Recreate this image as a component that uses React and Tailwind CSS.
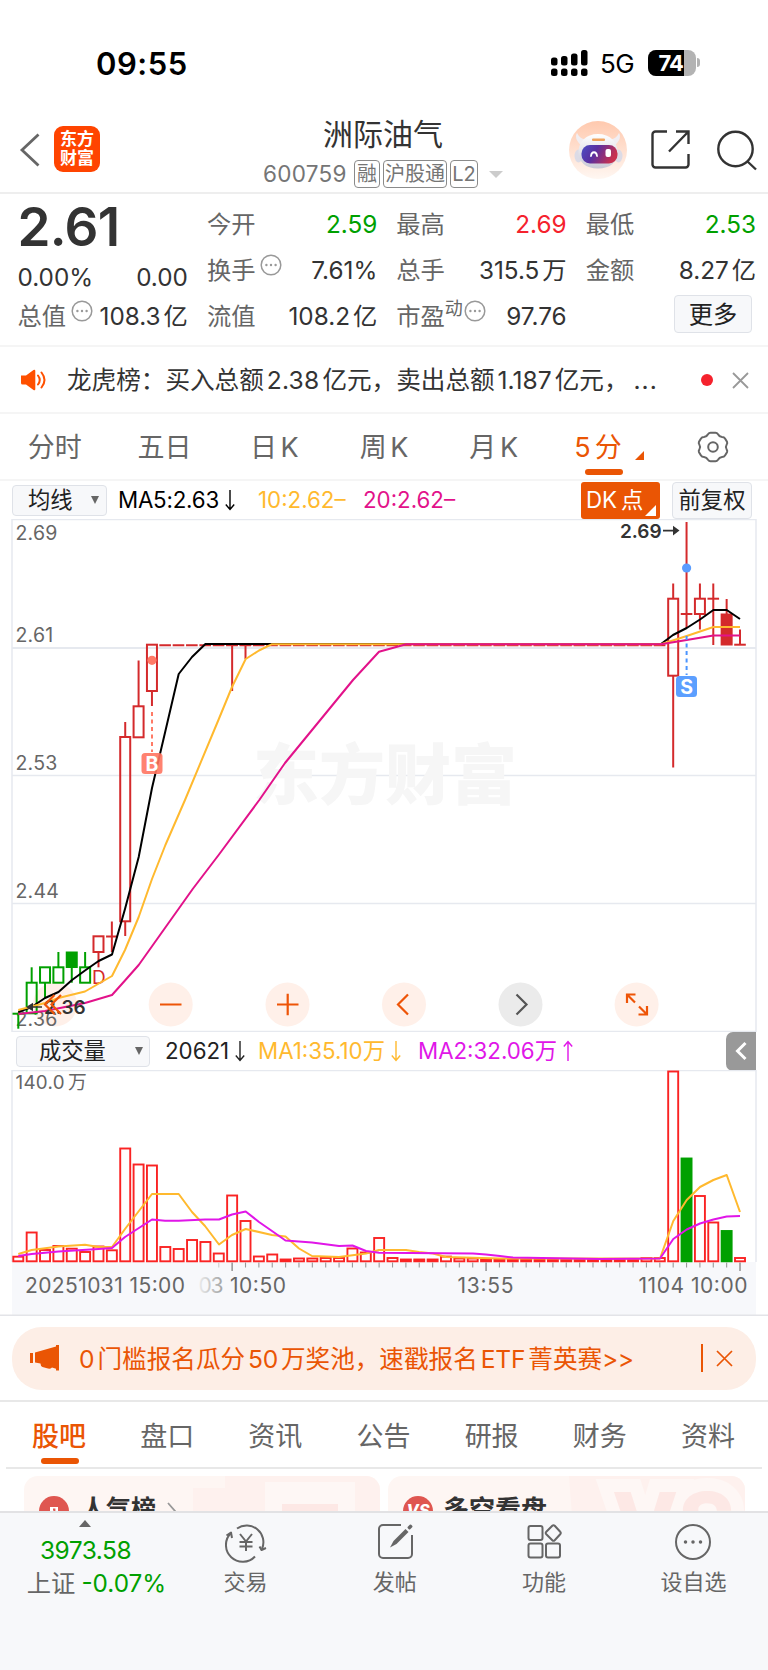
import React from "react";

const STEP = 13.365;
const barX = (i) => 18.3 + STEP * i;

const RED = "#d42a2c";
const GREEN = "#00a000";

// [index, open/close top, open/close bottom, high, low, color, filled]
const candles = [
  [0, 1013.7, 1013.7, 1013.7, 1028.7, GREEN, false],
  [1, 982.7, 1013.3, 967.3, 1013.3, GREEN, false],
  [2, 967.3, 982.7, 967.3, 998, GREEN, false],
  [3, 967.3, 982.7, 952, 982.7, GREEN, false],
  [4, 952.5, 967, 952, 982.7, GREEN, true],
  [5, 967.3, 982.7, 952, 982.7, GREEN, false],
  [6, 936.3, 952, 936.3, 967.3, RED, false],
  [7, 936.5, 936.5, 921.5, 952, RED, false],
  [8, 737, 921.3, 722, 936, RED, false],
  [9, 706.3, 737.3, 660.5, 737.3, RED, false],
  [10, 644.7, 691, 644.7, 706, RED, false],
  [16, 645, 645, 645, 691, RED, false],
  [17, 645, 645, 645, 659, RED, false],
  [49, 598.7, 675.7, 583.5, 767.5, RED, false],
  [50, 614, 614, 522, 628, RED, false],
  [51, 598.7, 614, 583.5, 629.5, RED, false],
  [52, 598.7, 598.7, 583.5, 645, RED, false],
  [53, 614.5, 644.5, 599, 644.5, RED, true],
  [54, 644.7, 644.7, 629.5, 644.7, RED, false],
];

const volumeTops = [
  1256.7, 1232.5, 1250, 1246, 1248.7, 1252, 1246.5, 1250.3, 1148.5, 1164.5, 1165.5,
  1247, 1249, 1240, 1242, 1253.5, 1195.5, 1221, 1256.5, 1254.5, 1259.5, 1258.5,
  1258.5, 1258, 1258, 1248.5, 1252.5, 1238, 1258, 1259.5, 1259.5, 1259.5, 1256.6,
  1258.5, 1258.5, 1259.5, 1259.5, 1259.5, 1259.5, 1259.5, 1259.5, 1259.5, 1259.5,
  1259.5, 1259.5, 1259.5, 1259.5, 1258, 1258, 1071.5, 1158.5, 1196, 1222.5, 1231, 1258,
];

const ma5 = "18.3,1012 31.7,1007 45,998 58.5,992 72,980 85,970.5 98.6,961 112,954.5 125,909 138.7,857 152,788 165.4,731 178.7,674 192,657 205.4,644 661,644 673,635 686.7,628 700,619.5 713.4,610 726.7,610 740,619";
const ma10 = "18.3,1010 45,1003 58.5,998 85,991.5 112,976 125,950 138.7,917 152,879 165.4,845 185,800 218,721 232,687 245.7,659 259,650.5 272,644.2 661,644.2 686.7,636 713.4,627 740,627";
const ma20 = "18.3,1014 45,1011 85,1003 112,995 125,980.5 138.7,965 192.7,889 219,854.5 259.3,800 285,763 353,680 379,651.7 392.6,648 406,644.2 661,644.2 686.7,640 713.4,635.5 740,635.5";
const vol1 = "18.3,1254 31.7,1250 58.5,1246.5 85,1244.7 98.6,1247 112,1247 125,1229 152,1194 178.7,1194 192,1212 205,1226 219,1244.5 232,1235 245.7,1229 272,1235 285.5,1236.5 299,1248.5 312,1256 339,1257 366,1253.5 379,1250 406,1250 419,1252 433,1253.5 446,1257 500,1258.5 660,1258.5 673.3,1221 686.7,1200 700,1187 713.4,1180 726.7,1175 740,1212";
const vol2 = "18.3,1256 31.7,1254 58.5,1251.5 98.6,1249 112,1248 125,1237 152,1219.5 165,1220.7 178.7,1220.7 205,1219.5 219,1219.5 232,1214.5 245.7,1211.5 259,1222 272,1231 285.5,1240.5 312,1242.5 339,1246 352.5,1245.5 366,1251 379,1252.7 473,1253.5 486,1254.5 500,1256 513,1257.5 600,1259 660,1258.5 673.3,1239 686.7,1229.5 700,1223.5 713.4,1219.5 726.7,1216.5 740,1216";

function Arrow({ up }) {
  return (
    <svg className="ml-[6px] shrink-0" width="10" height="22" viewBox="0 0 10 22" fill="none" stroke="currentColor" strokeWidth="1.4">
      {up ? <path d="M5 21V2M.8 6.5 5 1.5l4.2 5" /> : <path d="M5 1v19M.8 15.5 5 20.5l4.2-5" />}
    </svg>
  );
}

function Dots() {
  return (
    <svg className="-mt-[9px] ml-[5px] shrink-0" width="22" height="22" viewBox="0 0 22 22" fill="none" stroke="#999">
      <circle cx="11" cy="11" r="9.8" strokeWidth="1.5" />
      <path d="M6.4 11h.01M11 11h.01M15.6 11h.01" strokeWidth="2.4" strokeLinecap="round" />
    </svg>
  );
}

function StatusBar() {
  return (
    <div className="flex h-[110px] items-center pl-[96px] pt-[15px]">
      <div className="w-[454px] pt-[2px] text-[31px] font-semibold leading-none tracking-[0.5px] text-black">09:55</div>
      <svg width="38" height="28" viewBox="0 0 38 28" fill="#000">
        <rect x="1" y="8.5" width="6.5" height="8" rx="2.5" />
        <rect x="11" y="7" width="6.5" height="9.5" rx="2.5" />
        <rect x="21" y="4.5" width="6.5" height="12" rx="2.5" />
        <rect x="31" y="1" width="6.5" height="15.5" rx="2.5" />
        <rect x="1" y="19.500" width="6.5" height="7.500" rx="2.5" />
        <rect x="11" y="19.500" width="6.5" height="7.500" rx="2.5" />
        <rect x="21" y="19.500" width="6.5" height="7.500" rx="2.5" />
        <rect x="31" y="19.500" width="6.5" height="7.500" rx="2.5" />
      </svg>
      <div className="ml-[12px] w-[48px] pt-[2px] text-[26px] leading-none tracking-[-0.5px] text-black">5G</div>
      <div className="flex h-[26px] w-[48px] items-center overflow-hidden rounded-[8px] bg-[#b3b3b3]">
        <div className="flex h-full w-[36px] items-center justify-end bg-black pr-[1px] text-[22px] font-bold leading-none tracking-[-1px] text-white">74</div>
      </div>
      <div className="ml-[1px] h-[9px] w-[3px] rounded-r-[3px] bg-[#b3b3b3]" />
    </div>
  );
}

function Robot() {
  return (
    <svg width="58" height="58" viewBox="0 0 58 58">
      <defs>
        <linearGradient id="halo" x1="0" y1="0" x2="0" y2="1">
          <stop offset="0" stopColor="#ffc9ae" />
          <stop offset="1" stopColor="#fff7f2" />
        </linearGradient>
        <linearGradient id="visor" x1="0" y1="0" x2="1" y2="0.3">
          <stop offset="0" stopColor="#4b4fc4" />
          <stop offset="0.45" stopColor="#5a2fa0" />
          <stop offset="1" stopColor="#c8304f" />
        </linearGradient>
        <linearGradient id="shell" x1="0" y1="0" x2="0" y2="1">
          <stop offset="0" stopColor="#ffffff" />
          <stop offset="1" stopColor="#c9c9d6" />
        </linearGradient>
      </defs>
      <circle cx="29" cy="29" r="29" fill="url(#halo)" />
      <path d="M12 24C7 20 6 15 8 12c2 4 5 6 9 7zM46 24c5-4 6-9 4-12-2 4-5 6-9 7z" fill="#f1eef2" />
      <ellipse cx="9.5" cy="35" rx="4" ry="6.5" fill="#dcdbe6" />
      <ellipse cx="49.500" cy="35" rx="4" ry="6.5" fill="#dcdbe6" />
      <path d="M29 13c12 0 19.500 8 19.500 18 0 10-7 16.500-19.500 16.500S9.500 41 9.500 31c0-10 7.500-18 19.500-18z" fill="url(#shell)" />
      <rect x="12.500" y="24" width="36" height="18.500" rx="8.500" fill="url(#visor)" />
      <path d="M22 35c.5-5 5.500-5 6 0" fill="none" stroke="#fff" strokeWidth="1.800" strokeLinecap="round" />
      <rect x="36.500" y="28" width="5.500" height="8" rx="2" fill="#fff" />
      <rect x="23" y="17.500" width="13" height="2.500" rx="1" fill="#f0a35e" />
    </svg>
  );
}

function Header() {
  const tag = "flex h-[28px] items-center justify-center rounded-[4px] border-[1.5px] border-[#8a8a8a] text-[20px] leading-none text-[#757575]";
  return (
    <header className="flex h-[84px] items-center border-b-2 border-[#eee] pl-[19px]">
      <svg className="mt-[-3px]" width="22" height="34" viewBox="0 0 22 34" fill="none" stroke="#666" strokeWidth="2.8">
        <path d="M19.500 1.500 3 17l16.500 15.500" />
      </svg>
      <div className="ml-[13px] mt-[-5px] flex h-[46px] w-[46px] flex-col items-center justify-center rounded-[9px] bg-[#ff4400] text-[17px] font-bold leading-[18.500px] text-white">
        <span>东方</span>
        <span>财富</span>
      </div>
      <div className="ml-[163px] flex h-full w-[240px] flex-col items-start">
        <div className="ml-[60px] mt-[7px] text-[30px] leading-[34px] text-[#333]">洲际油气</div>
        <div className="mt-[9px] flex items-center">
          <span className="w-[91px] text-[22.500px] leading-none tracking-[0.3px] text-[#757575]">600759</span>
          <span className={tag + " w-[26px]"}>融</span>
          <span className={tag + " ml-[3px] w-[64px]"}>沪股通</span>
          <span className={tag + " ml-[3px] w-[28px]"}>L2</span>
          <span className="ml-[11px] h-0 w-0 border-x-[7px] border-t-[7px] border-x-transparent border-t-[#ccc]" />
        </div>
      </div>
      <div className="mt-[-2px] flex items-center pl-[66px]">
        <Robot />
        <svg className="ml-[23px]" width="42" height="42" viewBox="0 0 42 42" fill="none" stroke="#333" strokeWidth="2.400">
          <path d="M17 2.500H5.500a3 3 0 0 0-3 3v30a3 3 0 0 0 3 3h30a3 3 0 0 0 3-3V25M26 2.500h12.500v12.500M38.500 2.500 19 22.500" />
        </svg>
        <svg className="ml-[25px]" width="42" height="42" viewBox="0 0 42 42" fill="none" stroke="#333" strokeWidth="2.400">
          <circle cx="18.500" cy="20" r="17.200" />
          <path d="m30.500 32.500 8.500 8" />
        </svg>
      </div>
    </header>
  );
}

function Cell({ label, sup, dots, value, unit, color = "text-[#333]" }) {
  return (
    <div className="flex h-[46px] items-center justify-between whitespace-nowrap leading-none">
      <span className="flex items-center text-[#666]">
        {label}
        {sup && <span className="-mt-[14px] text-[18px]">{sup}</span>}
        {dots && (sup ? <span className="-ml-[4px] flex"><Dots /></span> : <Dots />)}
      </span>
      <span className={color}>
        {value}
        {unit && <span className="ml-[3px]">{unit}</span>}
      </span>
    </div>
  );
}

function Quote() {
  return (
    <section className="grid h-[153px] grid-cols-4 gap-x-[19px] border-b-2 border-[#f5f5f5] pl-[17.500px] pr-[12px] pt-[7px] text-[24.300px]">
      <div>
        <div className="h-[58px] text-[53px] font-semibold leading-[53px] tracking-[-0.700px] text-[#333]">2.61</div>
        <div className="flex h-[36px] items-center justify-between leading-none text-[#333]">
          <span>0.00%</span>
          <span>0.00</span>
        </div>
        <div className="-mt-[2px]">
          <Cell label="总值" dots value="108.3" unit="亿" />
        </div>
      </div>
      <div>
        <Cell label="今开" value="2.59" color="text-[#00a000]" />
        <Cell label="换手" dots value="7.61%" />
        <Cell label="流值" value="108.2" unit="亿" />
      </div>
      <div>
        <Cell label="最高" value="2.69" color="text-[#f5222d]" />
        <Cell label="总手" value="315.5" unit="万" />
        <Cell label="市盈" sup="动" dots value="97.76" />
      </div>
      <div>
        <Cell label="最低" value="2.53" color="text-[#00a000]" />
        <Cell label="金额" value="8.27" unit="亿" />
        <div className="flex justify-end pr-[4px] pt-[2px]">
          <button className="h-[38px] w-[78px] rounded-[4px] border-[1.500px] border-[#dfe2e8] bg-[#f7f8fa] leading-none text-[#222]">更多</button>
        </div>
      </div>
    </section>
  );
}

function Notice() {
  return (
    <div className="flex h-[67px] items-center border-b-2 border-[#f5f5f5] pl-[21px] pt-[1px] leading-none">
      <svg width="26" height="22" viewBox="0 0 26 22" fill="#ff5000">
        <path d="M0 6.500h5L12.500 1q1.800-.8 1.800 1v18q0 1.800-1.800 1L5 15.500H1.500Q0 15.500 0 14z" />
        <path d="M17 6.500q3.500 4.500 0 9M20.500 3.500q6 7.500 0 15" fill="none" stroke="#ff5000" strokeWidth="2" strokeLinecap="round" />
      </svg>
      <div className="ml-[20px] flex w-[634px] items-center whitespace-nowrap pt-[1px] text-[24.600px] text-[#333]">
        龙虎榜：买入总额<span className="mx-[3px] tracking-[0.2px]">2.38</span>亿元，卖出总额<span className="mx-[3px]">1.187</span>亿元，<span className="ml-[5px] tracking-[1px]">...</span>
      </div>
      <span className="h-[12px] w-[12px] rounded-full bg-[#f5222d]" />
      <svg className="ml-[19px]" width="17" height="17" viewBox="0 0 17 17" stroke="#999" strokeWidth="1.800">
        <path d="m1 1 15 15M16 1 1 16" />
      </svg>
    </div>
  );
}

function PeriodTabs() {
  const items = ["分时", "五日", "日 K", "周 K", "月 K"];
  return (
    <nav className="grid h-[67px] grid-cols-7 border-b-2 border-[#f5f5f5] text-[27px] leading-none text-[#666]">
      {items.map((t) => (
        <span key={t} className="flex items-center justify-center pt-[1px] [word-spacing:-4px]">{t}</span>
      ))}
      <span className="relative flex items-center justify-center pr-[11px] pt-[1px] text-[#ea5504]">
        5<span className="ml-[4px]">分</span>
        <i className="absolute bottom-[19px] right-[14px] h-0 w-0 border-b-[9px] border-l-[9px] border-b-[#ea5504] border-l-transparent" />
        <i className="absolute bottom-[4px] left-[36px] h-[6px] w-[38px] rounded-[3px] bg-[#ea5504]" />
      </span>
      <span className="flex items-center justify-center">
        <svg width="32" height="32" viewBox="0 0 32 32" fill="none" stroke="#666" strokeWidth="2">
          <path d="M11 3.200Q12 1.700 13.500 1.700h5q1.500 0 2.500 1.500 1.300 2.600 4 2.800 2.200 0 3 1.400l2 3.400q.7 1.400-.4 2.900-1.500 2.300 0 4.600 1.100 1.500.4 2.900l-2 3.400q-.8 1.400-3 1.400-2.700.2-4 2.800-1 1.500-2.500 1.500h-5q-1.500 0-2.500-1.500-1.300-2.600-4-2.800-2.200 0-3-1.400l-2-3.400q-.7-1.400.4-2.900 1.500-2.300 0-4.600-1.100-1.500-.4-2.900l2-3.400Q4.800 6 7 6q2.700-.2 4-2.800z" />
          <circle cx="16" cy="16" r="4.800" />
        </svg>
      </span>
    </nav>
  );
}

function ChartToolbar() {
  const box = "flex items-center border-[1.500px] border-[#dfe2e8] bg-[#f7f8fa] rounded-[4px] text-[#222]";
  return (
    <div className="flex h-[38px] items-center pl-[12px] text-[22.300px] leading-none">
      <div className={box + " h-[31px] w-[95px] pl-[15px]"}>
        均线
        <i className="ml-[18px] h-0 w-0 border-x-[4.500px] border-t-[8px] border-x-transparent border-t-[#666]" />
      </div>
      <div className="ml-[11px] flex w-[140px] items-center tracking-[-0.200px] text-black">MA5:2.63<Arrow /></div>
      <div className="w-[105px] text-[#ffb92e]">10:2.62–</div>
      <div className="w-[218px] text-[#e2128a]">20:2.62–</div>
      <div className="relative flex h-[37px] w-[79px] items-center rounded-[3px] bg-[#ea5504] pl-[5px] text-white">
        DK<span className="ml-[4px]">点</span>
        <i className="absolute bottom-[3px] right-[4px] h-0 w-0 border-b-[11px] border-l-[11px] border-b-white border-l-transparent" />
      </div>
      <div className={box + " ml-[12px] h-[37px] w-[80px] justify-center"}>前复权</div>
    </div>
  );
}

function Candle({ c }) {
  const [i, top, bottom, high, low, color, filled] = c;
  const x = barX(i);
  return (
    <g stroke={color} strokeWidth="2" fill={filled ? color : "none"}>
      {high < top && <path d={`M${x} ${high}V${top}`} />}
      {low > bottom && <path d={`M${x} ${bottom}V${low}`} />}
      {top === bottom ? <path d={`M${x - 5.8} ${top}h11.600`} /> : <rect x={x - 5} y={top} width="10" height={bottom - top} />}
    </g>
  );
}

function PriceChart() {
  const labels = [["2.69", 540], ["2.61", 641.500], ["2.53", 769.500], ["2.44", 898], ["2.36", 1026]];
  return (
    <svg className="block" width="768" height="513" viewBox="0 519 768 513" fill="none">
      <g stroke="#e6e9ef" strokeWidth="1.500">
        <path d="M12 519.500H756V1031.500H12z" />
        <path d="M12 648H756" strokeWidth="2" />
        <path d="M12 775.500H756M12 903.500H756" />
      </g>
      <text x="253" y="799" fontSize="66" fontWeight="900" fill="#f6f6f6" className="font-['Noto_Sans_CJK_SC',sans-serif]">东方财富</text>
      <circle cx="55" cy="1004.500" r="22" fill="#fff0e9" />
      <g fontSize="19.500" fill="#666" letterSpacing="0.200">
        {labels.map(([t, y]) => <text key={t} x="15.500" y={y}>{t}</text>)}
      </g>

      <path d={`M${barX(11) - 6} 645.300H${barX(48) + 7}`} stroke={RED} strokeWidth="2" strokeDasharray="11.600 1.765" />
      {candles.map((c) => <Candle key={c[0]} c={c} />)}
      <text x="92" y="983.500" fontSize="19" fill={RED}>D</text>

      <g strokeWidth="2" strokeLinejoin="round">
        <polyline points={ma5} stroke="#000" />
        <polyline points={ma10} stroke="#ffb92e" />
        <polyline points={ma20} stroke="#e2128a" />
      </g>

      {/* buy / sell marks */}
      <circle cx="152" cy="660.300" r="4.600" fill="#ff7a66" />
      <path d="M152 712V752" stroke="#ff7a66" strokeWidth="2" strokeDasharray="4 3.500" />
      <rect x="141.500" y="753" width="21" height="21" rx="3.500" fill="#ff7461" fillOpacity="0.900" />
      <text x="152" y="770.500" fontSize="19.500" fontWeight="700" fill="#fff" textAnchor="middle">B</text>
      <circle cx="686.600" cy="568" r="4.600" fill="#5a9cff" />
      <path d="M686.600 636V675" stroke="#4b95ff" strokeWidth="2" strokeDasharray="4 3.500" />
      <rect x="676" y="676" width="21" height="21" rx="3.500" fill="#5c9fff" />
      <text x="686.600" y="693.500" fontSize="19.500" fontWeight="700" fill="#fff" textAnchor="middle">S</text>

      <g fill="#333" stroke="none">
        <text x="620" y="537.500" fontSize="19" fontWeight="600">2.69</text>
        <path d="M663 529.800h10v-4l6.500 4.800-6.500 4.800v-4h-10z" />
        <text x="44" y="1014" fontSize="19" fontWeight="600">2.36</text>
        <path d="M42 1006.200H33v-3.500l-7 4.300 7 4.300v-3.500h9z" />
      </g>

      <g fill="#fff0e9">
        <circle cx="170.700" cy="1004.500" r="22" />
        <circle cx="287.500" cy="1004.500" r="22" />
        <circle cx="404" cy="1004.500" r="22" />
        <circle cx="636.600" cy="1004.500" r="22" />
      </g>
      <circle cx="520.500" cy="1004.500" r="22" fill="#ebebeb" />
      <g stroke="#ee5407" strokeWidth="2.200">
        <path d="m54.500 995-9.500 9.500 9.500 9.500M61 995l-9.500 9.500 9.500 9.500" />
        <path d="M160 1004.500h21.500M277 1004.500h21.500M287.700 993.700v21.500" />
        <path d="m408 994.500-10 10 10 10" />
        <path d="M627 1003v-8.500h8.500M627 994.500l8 8M647 1006v8.500h-8.500M647 1014.500l-8-8" />
      </g>
      <path d="m516.500 994.500 10 10-10 10" stroke="#555" strokeWidth="2.200" />
    </svg>
  );
}

function VolumeToolbar() {
  return (
    <div className="flex h-[38px] items-center pl-[16px] text-[22.300px] leading-none">
      <div className="flex h-[31px] w-[134px] items-center rounded-[4px] border-[1.500px] border-[#dfe2e8] bg-[#f7f8fa] pl-[22px] text-[#222]">
        成交量
        <i className="ml-[29px] h-0 w-0 border-x-[4.500px] border-t-[8px] border-x-transparent border-t-[#666]" />
      </div>
      <div className="ml-[15px] flex w-[93px] items-center text-[#222]">20621<Arrow /></div>
      <div className="flex w-[160px] items-center text-[#ffb92e]">MA1:35.10万<Arrow /></div>
      <div className="flex w-[308px] items-center text-[#e016e8]">MA2:32.06万<Arrow up /></div>
      <div className="flex h-[39px] w-[30px] items-center justify-center rounded-l-[7px] bg-[#999]">
        <svg width="12" height="20" viewBox="0 0 12 20" fill="none" stroke="#fff" strokeWidth="3">
          <path d="m10.500 2-8 8 8 8" />
        </svg>
      </div>
    </div>
  );
}

function VolumeChart() {
  return (
    <svg className="block" width="768" height="246" viewBox="0 1070 768 246" fill="none">
      <defs>
        <linearGradient id="fade" x1="198" x2="226" y1="0" y2="0" gradientUnits="userSpaceOnUse">
          <stop offset="0" stopColor="#eee" />
          <stop offset="1" stopColor="#999" />
        </linearGradient>
      </defs>
      <rect x="12" y="1262" width="744" height="53" fill="#f7f8fb" />
      <path d="M12 1262V1070.500H756V1262" stroke="#e6e9ef" strokeWidth="1.500" />
      <path d="M0 1315.300H768" stroke="#e3e4e8" strokeWidth="1.500" />
      <text x="15.500" y="1089" fontSize="18.800" fill="#666" letterSpacing="0.300">140.0<tspan dx="3">万</tspan></text>

      {volumeTops.map((top, i) => {
        const down = i === 50 || i === 53;
        return (
          <rect key={i} x={barX(i) - 5} y={top} width="10" height={1261.300 - top} strokeWidth="1.900"
            stroke={down ? GREEN : "#fa2323"} fill={down ? GREEN : "none"} />
        );
      })}
      <g strokeWidth="2" strokeLinejoin="round">
        <polyline points={vol1} stroke="#ffb92e" />
        <polyline points={vol2} stroke="#e016e8" />
      </g>

      {volumeTops.map((_, i) => {
        if (i < 15) return null;
        const major = i === 16 || i === 35 || i === 54;
        return <path key={i} d={`M${barX(i)} 1262.500V${major ? 1271 : 1267.500}`} stroke={i === 15 ? "#ccc" : "#999"} strokeWidth={major ? 1.600 : 1.100} />;
      })}
      <g fontSize="21" fill="#666">
        <text x="25" y="1292.500" textLength="160">20251031 15:00</text>
        <text x="198.500" y="1292.500" textLength="25" fill="url(#fade)">03</text>
        <text x="230" y="1292.500" textLength="56">10:50</text>
        <text x="457.500" y="1292.500" textLength="56">13:55</text>
        <text x="638.500" y="1292.500" textLength="109">1104 10:00</text>
      </g>
    </svg>
  );
}

function Banner() {
  return (
    <div className="flex h-[86px] items-center border-b-2 border-[#e8e8e8] px-[12px]">
      <div className="flex h-[63px] w-full items-center rounded-[30px] bg-[#fdeee6] pl-[18px] leading-none text-[#ea5504]">
        <svg width="30" height="26" viewBox="0 0 30 26" fill="#ea5504">
          <path d="M0 8h3v10H0zM5 7.500 26 1.500V0h3v25.500h-3v-1.700l-4-1.300q-2 2-5 .8l-4.500-1.300q-2-.7-2-3.500L5 17.500z" />
        </svg>
        <div className="ml-[19px] w-[622px] whitespace-nowrap pt-[2px] text-[24.600px]">
          <span className="mr-[3px]">0</span>门槛报名瓜分<span className="mx-[3px] tracking-[-0.300px]">50</span>万奖池，速戳报名<span className="mx-[3px] tracking-[-0.200px]">ETF</span>菁英赛<span className="tracking-[-0.700px]">&gt;&gt;</span>
        </div>
        <span className="h-[28px] w-[1.500px] bg-[#ea5504]" />
        <svg className="ml-[13px]" width="17" height="17" viewBox="0 0 17 17" stroke="#ea5504" strokeWidth="1.700">
          <path d="m1 1 15 15M16 1 1 16" />
        </svg>
      </div>
    </div>
  );
}

function InfoTabs() {
  const items = ["盘口", "资讯", "公告", "研报", "财务", "资料"];
  return (
    <nav className="mx-[6px] h-[67px] border-b-2 border-[#e8e8e8]">
      <div className="-ml-[1px] grid h-full grid-cols-7 text-[27px] leading-none text-[#666]">
        <span className="relative flex items-center justify-center pt-[3px] font-medium text-[#ea5504]">
          股吧
          <i className="absolute bottom-[3px] left-[36px] h-[6px] w-[38px] rounded-[3px] bg-[#ea5504]" />
        </span>
        {items.map((t) => (
          <span key={t} className="flex items-center justify-center pt-[3px]">{t}</span>
        ))}
      </div>
    </nav>
  );
}

function Cards() {
  return (
    <div className="flex h-[42px] items-start gap-[8px] overflow-hidden pl-[24px] pt-[7px] text-[25px] font-bold leading-none text-[#333]">
      <div className="relative flex h-[80px] w-[356px] items-start overflow-hidden rounded-[14px] bg-[#fef6f3] pl-[15px] pt-[20px]">
        <svg className="absolute right-0 top-0" width="190" height="80" viewBox="0 0 190 80">
          <path d="M3 12h32V0h155v80H3z" fill="#fef1ee" />
          <path d="M75 6h90v74H75z" fill="#fef7f5" />
          <path d="M92 28h56v52H92z" fill="#fde8e5" />
        </svg>
        <svg className="shrink-0" width="30" height="30" viewBox="0 0 30 30">
          <circle cx="15" cy="15" r="15" fill="#df5650" />
          <path d="M6 16.500h5V11h8v6h5v9H6z" fill="#fff" />
          <path d="M14 13.500h1.500V20" fill="none" stroke="#df5650" strokeWidth="1.800" />
        </svg>
        <span className="ml-[12px] mt-[1px]">人气榜</span>
        <svg className="ml-[11px] mt-[6px]" width="10" height="18" viewBox="0 0 10 18" fill="none" stroke="#999" strokeWidth="1.800"><path d="m1 1 7 8-7 8" /></svg>
      </div>
      <div className="relative flex h-[80px] w-[357px] items-start overflow-hidden rounded-[14px] bg-[#fef6f3] pl-[15px] pt-[20px]">
        <svg className="absolute right-0 top-0" width="176" height="80" viewBox="0 0 176 80">
          <path d="M0 0h176v80H6z" fill="#fef1ee" />
          <text x="43" y="79" fontSize="86" fontWeight="800" fill="#fde8e5" stroke="#fef7f5" strokeWidth="26" paintOrder="stroke">VS</text>
        </svg>
        <svg className="shrink-0" width="30" height="30" viewBox="0 0 30 30">
          <circle cx="15" cy="15" r="15" fill="#df5650" />
          <text x="15" y="20" fontSize="16" fontWeight="800" fontStyle="italic" fill="#fff" textAnchor="middle">VS</text>
        </svg>
        <span className="ml-[10px] mt-[1px] text-[26px]">多空看盘</span>
      </div>
    </div>
  );
}

function NavItem({ label, children }) {
  return (
    <div className="flex w-[149.300px] flex-col items-center pt-[8px] text-[22px] leading-none text-[#666]">
      <svg width="42" height="42" viewBox="0 0 42 42" fill="none" stroke="#666" strokeWidth="2" strokeLinejoin="round">{children}</svg>
      <span className="mt-[8px]">{label}</span>
    </div>
  );
}

function BottomNav() {
  return (
    <footer className="flex h-[159px] border-t-2 border-[#e2e2e4] bg-[#f7f8fa]">
      <div className="flex w-[171px] flex-col items-center pt-[7px] text-[24px] leading-none text-[#00a000]">
        <i className="h-0 w-0 border-x-[6.500px] border-b-[7px] border-x-transparent border-b-[#666]" />
        <span className="mt-[11px] text-[24.500px] tracking-[-0.500px]">3973.58</span>
        <span className="mt-[8px] whitespace-nowrap pl-[22px] text-[24.300px]"><span className="mr-[6px] text-[#666]">上证</span>-0.07%</span>
      </div>
      <NavItem label="交易">
        <path d="M12 7.500A16.800 16.800 0 0 1 37 28M30 35.500A16.800 16.800 0 0 1 5.500 12.500" />
        <path d="M1.500 14.500 6 11.500l1 5.500M34.500 25.500l2 3.500 4.500-2" />
        <path d="m15 13 6 7.500 6-7.500M21 20.500V30M14.500 21h13M14.500 25.500h13" />
      </NavItem>
      <NavItem label="发帖">
        <path d="M27 4H9a4 4 0 0 0-4 4v25a4 4 0 0 0 4 4h25a4 4 0 0 0 4-4V14" />
        <path d="M16 26.500 19.500 20 31.500 8l3 3-12 12z" fill="#666" stroke="none" />
        <path d="m34.500 6.500 2-2 1 1-2 2z" fill="#666" />
      </NavItem>
      <NavItem label="功能">
        <rect x="5.500" y="5" width="14" height="14" rx="2" />
        <rect x="5.500" y="22.500" width="14" height="14" rx="2" />
        <rect x="23" y="22.500" width="14" height="14" rx="2" />
        <path d="m29.300 4.800-6 6q-1.200 1.200 0 2.400l6 6q1.200 1.200 2.400 0l5.500-6q1.200-1.200 0-2.400l-5.500-6q-1.200-1.200-2.400 0z" />
      </NavItem>
      <NavItem label="设自选">
        <circle cx="21" cy="21" r="17" />
        <path d="M13.500 21h.01M21 21h.01M28.500 21h.01" strokeWidth="3.500" strokeLinecap="round" />
      </NavItem>
    </footer>
  );
}

export default function App() {
  return (
    <div className="h-[1670px] w-[768px] overflow-hidden bg-white font-['Inter','Noto_Sans_CJK_SC',sans-serif]">
      <StatusBar />
      <Header />
      <Quote />
      <Notice />
      <PeriodTabs />
      <ChartToolbar />
      <PriceChart />
      <VolumeToolbar />
      <VolumeChart />
      <Banner />
      <InfoTabs />
      <Cards />
      <BottomNav />
    </div>
  );
}
